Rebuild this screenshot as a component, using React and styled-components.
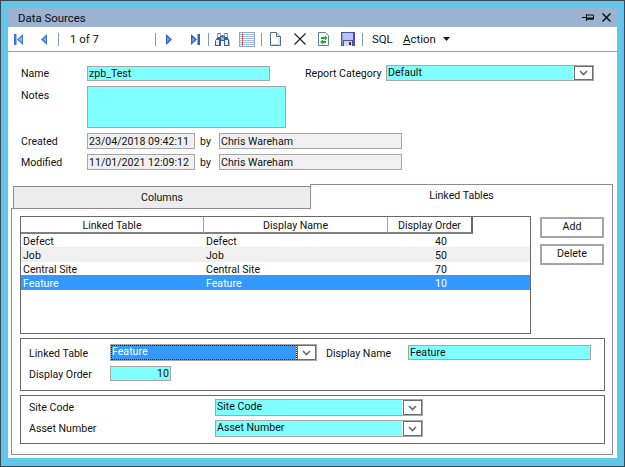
import React from 'react';
import styled, { createGlobalStyle } from 'styled-components';

const GlobalStyle = createGlobalStyle`
  html, body { margin: 0; padding: 0; background: #62c6e8; }
  body { font-family: Roboto, "Liberation Sans", Arial, sans-serif; font-size: 10.6px; color: #111; }
`;

const Frame = styled.div`
  box-sizing: border-box;
  width: 625px;
  height: 467px;
  padding: 7px;
  background: #62c6e8;
  border: 1px solid #3c4650;
`;

const Win = styled.div`
  width: 609px;
  height: 450px;
  background: #fff;
  display: flex;
  flex-direction: column;
`;

const TitleBar = styled.div`
  height: 19px;
  flex: none;
  display: flex;
  align-items: center;
  padding: 0 6px 0 10px;
  background: #9bb3d1;
  font-size: 11.4px;
  color: #0a0a14;
`;

const TitleText = styled.span`
  flex: 1;
`;

const TitleGlyphs = styled.div`
  display: flex;
  align-items: center;
  gap: 8px;
`;

const Toolbar = styled.div`
  box-sizing: border-box;
  height: 25px;
  flex: none;
  display: flex;
  align-items: center;
  padding-left: 6px;
  border-bottom: 1px solid #a0a0a0;
  font-size: 11.4px;
`;

const Slot = styled.span`
  display: flex;
  align-items: center;
  flex: none;
  margin-left: ${p => p.$ml || 0}px;
  width: ${p => (p.$w ? `${p.$w}px` : 'auto')};
`;

const Sep = styled.span`
  flex: none;
  width: 1px;
  height: 13px;
  background: #7f9db9;
  margin-left: ${p => p.$ml}px;
`;

const FormArea = styled.div`
  padding: 13px 0 0 13px;
`;

const FormRow = styled.div`
  display: flex;
  align-items: ${p => (p.$top ? 'flex-start' : 'center')};
  margin-top: ${p => p.$mt || 0}px;
`;

const Label = styled.span`
  flex: none;
  width: ${p => p.$w}px;
  margin-left: ${p => p.$ml || 0}px;
  padding-top: ${p => p.$pt || 0}px;
  white-space: nowrap;
`;

const Field = styled.div`
  box-sizing: border-box;
  flex: none;
  width: ${p => p.$w}px;
  height: ${p => p.$h || 15}px;
  margin-left: ${p => p.$ml || 0}px;
  padding: 0 1px;
  line-height: ${p => (p.$h === 16 ? 15 : 13)}px;
  white-space: nowrap;
  text-align: ${p => (p.$right ? 'right' : 'left')};
  border: 1px solid #a6a6a6;
  background: ${p => (p.$readonly ? '#f0f0f0' : '#7fffff')};
`;

const Combo = styled.div`
  box-sizing: border-box;
  flex: none;
  display: flex;
  width: ${p => p.$w}px;
  height: ${p => p.$h || 17}px;
  margin-left: ${p => p.$ml || 0}px;
  border: 1px solid #a6a6a6;
  background: #7fffff;
`;

const ComboText = styled.div`
  flex: 1;
  padding: 0 1px;
  line-height: 13px;
  white-space: nowrap;
  border-right: 1px solid #fff;
  ${p => p.$selected && `
    background: #3399ff;
    color: #fff;
    outline: 1px dotted #222;
    outline-offset: -1px;
  `}
`;

const ComboButton = styled.div`
  box-sizing: border-box;
  flex: none;
  width: 19px;
  display: flex;
  align-items: center;
  justify-content: center;
  background: #fff;
  border: 1px solid #6d6d6d;
`;

const TabsArea = styled.div`
  padding: 14px 4px 0 3px;
`;

const TabStrip = styled.div`
  display: flex;
  align-items: flex-end;
  height: 24px;
`;

const Tab = styled.div`
  box-sizing: border-box;
  text-align: center;
  border: 1px solid #8c8c96;
  ${p => p.$active ? `
    width: 303px;
    height: 25px;
    margin-bottom: -1px;
    padding-top: 4px;
    background: #fff;
    border-bottom: none;
    position: relative;
  ` : `
    width: 297px;
    height: 22px;
    margin-left: 2px;
    padding-top: 4px;
    background: #ececec;
    border-right: none;
    border-bottom: none;
  `}
`;

const Panel = styled.div`
  box-sizing: border-box;
  width: 602px;
  height: 247px;
  padding: 7px 8px;
  border: 1px solid #8c8c96;
`;

const ListRow = styled.div`
  display: flex;
  align-items: flex-start;
`;

const List = styled.div`
  box-sizing: border-box;
  width: 511px;
  height: 118px;
  border: 1px solid #696969;
`;

const HeaderRow = styled.div`
  display: flex;
  height: 17px;
`;

const HeaderCell = styled.div`
  box-sizing: border-box;
  flex: none;
  width: ${p => p.$w}px;
  text-align: center;
  line-height: 18px;
  border-bottom: 2px solid #808080;
  border-right: ${p => (p.$last ? '2px solid #696969' : '1px solid #a0a0a0')};
`;

const DataRow = styled.div`
  display: flex;
  height: ${p => p.$h}px;
  line-height: ${p => p.$lh}px;
  background: ${p => (p.$selected ? '#3399ff' : p.$alt ? '#f0f0f0' : '#fff')};
  color: ${p => (p.$selected ? '#fff' : '#111')};
`;

const Cell = styled.div`
  flex: none;
  box-sizing: border-box;
  width: ${p => p.$w}px;
  padding-left: 2px;
  padding-right: ${p => (p.$num ? 26 : 0)}px;
  text-align: ${p => (p.$num ? 'right' : 'left')};
`;

const ButtonColumn = styled.div`
  display: flex;
  flex-direction: column;
  gap: 6px;
  margin: 1px 0 0 9px;
`;

const Button = styled.div`
  box-sizing: border-box;
  width: 64px;
  height: 21px;
  line-height: 16px;
  text-align: center;
  background: #fff;
  border: 2px solid #a6a6a6;
`;

const Group = styled.div`
  box-sizing: border-box;
  width: 585px;
  height: ${p => p.$h}px;
  margin-top: ${p => p.$mt}px;
  padding: ${p => p.$pad};
  border: 1px solid #696969;
`;

const rows = [
  { name: 'Defect', order: 40, h: 13, lh: 15 },
  { name: 'Job', order: 50, h: 15, lh: 18, alt: true },
  { name: 'Central Site', order: 70, h: 13, lh: 16 },
  { name: 'Feature', order: 10, h: 15, lh: 18, selected: true },
];

const Chevron = () => (
  <svg width="9" height="6" viewBox="0 0 9 6">
    <path d="M1 1l3.500 3.500L8 1" fill="none" stroke="#6a6a6a" strokeWidth="1.600" />
  </svg>
);

const FirstIcon = () => (
  <svg width="9" height="11" viewBox="0 0 9 11">
    <rect width="2.500" height="11" fill="#3f75d6" />
    <path d="M9 0v11L3 5.500z" fill="#3f75d6" />
    <path d="M8 2.500v6L4.500 5.500z" fill="#8db4ef" />
  </svg>
);

const PrevIcon = () => (
  <svg width="6" height="11" viewBox="0 0 6 11">
    <path d="M6 0v11L0 5.500z" fill="#3f75d6" />
    <path d="M5 3v5L2 5.500z" fill="#8db4ef" />
  </svg>
);

const NextIcon = () => (
  <svg width="6" height="11" viewBox="0 0 6 11">
    <path d="M0 0v11l6-5.500z" fill="#2f62c4" />
    <path d="M1 3v5l3-2.500z" fill="#6e9de6" />
  </svg>
);

const LastIcon = () => (
  <svg width="9" height="11" viewBox="0 0 9 11">
    <rect x="6.500" width="2.500" height="11" fill="#2f62c4" />
    <path d="M0 0v11l6-5.500z" fill="#2f62c4" />
    <path d="M1 3v5l3-2.500z" fill="#6e9de6" />
  </svg>
);

const BinocularsIcon = () => (
  <svg width="15" height="13" viewBox="0 0 15 13">
    <path d="M2.500 0h3v3h1v-1h2v1h1V0h3v4l2 4v5H9V8H6v5H0V8l2.500-4z" fill="#3b5f94" />
    <path d="M3 1h2v3H3zM10 1h2v3h-2zM1 7h3v5H1zM10 7h3v5h-3z" fill="#e4ecf7" />
    <rect x="6" y="4" width="3" height="3" fill="#9db0cc" />
  </svg>
);

const ListIcon = () => (
  <svg width="16" height="15" viewBox="0 0 16 15">
    <rect x=".5" y=".5" width="15" height="14" fill="#fff" stroke="#8fa6c6" />
    <path d="M1 2.500h14M1 4.500h14M1 6.500h14M1 8.500h14M1 10.500h14M1 12.500h14" stroke="#9dbce6" />
    <path d="M3.500 1v13" stroke="#e0622a" />
  </svg>
);

const PageIcon = () => (
  <svg width="11" height="14" viewBox="0 0 11 14">
    <path d="M.5.500h6l4 4v9H.500z" fill="#fff" stroke="#53688a" />
    <path d="M6.500.500v4h4" fill="#d9e2ee" stroke="#53688a" />
    <path d="M9 6v6.500H2" fill="none" stroke="#c3cedd" />
  </svg>
);

const CrossIcon = () => (
  <svg width="12" height="12" viewBox="0 0 12 12">
    <path d="M.5.500l11 11M11.500.500l-11 11" stroke="#222" strokeWidth="1.200" />
  </svg>
);

const RefreshPageIcon = () => (
  <svg width="11" height="14" viewBox="0 0 11 14">
    <path d="M.5.500h7l3 3v10H.500z" fill="#f7fbf7" stroke="#6a7c96" />
    <path d="M3 5h4V3.500L9.500 6 7 8.500V7H3z" fill="#25a33a" />
    <path d="M8 9H5V7.500L2 10l3 2.500V11h3z" fill="#25a33a" />
  </svg>
);

const SaveIcon = () => (
  <svg width="14" height="14" viewBox="0 0 14 14">
    <path d="M0 0h14v14H0z" fill="#4b50b4" />
    <rect x="2" y="1" width="10" height="7" fill="#b9c2f0" />
    <rect x="1" y="1" width="1" height="12" fill="#8c98e6" />
    <rect x="3" y="9" width="8" height="5" fill="#d5d8e2" />
    <rect x="8" y="10" width="2" height="3" fill="#30343f" />
  </svg>
);

const CaretIcon = () => (
  <svg width="7" height="4" viewBox="0 0 7 4">
    <path d="M0 0h7L3.500 4z" fill="#1a1a1a" />
  </svg>
);

const PinIcon = () => (
  <svg width="12" height="9" viewBox="0 0 12 9">
    <path d="M0 4.500h4M4.500 1v7M4.500 2h7v4h-7" fill="none" stroke="#111" />
    <path d="M4.500 5.500h7" stroke="#111" strokeWidth="2" />
  </svg>
);

const CloseIcon = () => (
  <svg width="9" height="9" viewBox="0 0 9 9">
    <path d="M.5.500l8 8M8.500.500l-8 8" stroke="#111" strokeWidth="1.500" />
  </svg>
);

const App = () => {
  return (
    <Frame>
      <GlobalStyle />
      <Win>
        <TitleBar>
          <TitleText>Data Sources</TitleText>
          <TitleGlyphs>
            <PinIcon />
            <CloseIcon />
          </TitleGlyphs>
        </TitleBar>

        <Toolbar>
          <Slot><FirstIcon /></Slot>
          <Slot $ml={18}><PrevIcon /></Slot>
          <Sep $ml={11} />
          <Slot $ml={11} $w={85}>1 of 7</Slot>
          <Sep $ml={0} />
          <Slot $ml={10}><NextIcon /></Slot>
          <Slot $ml={19}><LastIcon /></Slot>
          <Sep $ml={8} />
          <Slot $ml={6}><BinocularsIcon /></Slot>
          <Slot $ml={9}><ListIcon /></Slot>
          <Sep $ml={6} />
          <Slot $ml={8}><PageIcon /></Slot>
          <Slot $ml={13}><CrossIcon /></Slot>
          <Slot $ml={12}><RefreshPageIcon /></Slot>
          <Slot $ml={12}><SaveIcon /></Slot>
          <Sep $ml={7} />
          <Slot $ml={9} $w={21}>SQL</Slot>
          <Slot $ml={10} $w={35}><span><u>A</u>ction</span></Slot>
          <Slot $ml={5}><CaretIcon /></Slot>
        </Toolbar>

        <FormArea>
          <FormRow>
            <Label $w={66}>Name</Label>
            <Field $w={183}>zpb_Test</Field>
            <Label $w={81} $ml={35}>Report Category</Label>
            <Combo $w={208} $h={16}>
              <ComboText>Default</ComboText>
              <ComboButton><Chevron /></ComboButton>
            </Combo>
          </FormRow>
          <FormRow $top $mt={5}>
            <Label $w={66} $pt={3}>Notes</Label>
            <Field $w={199} $h={42} />
          </FormRow>
          <FormRow $mt={5}>
            <Label $w={66} $pt={1}>Created</Label>
            <Field $w={108} $h={16} $readonly>23/04/2018 09:42:11</Field>
            <Label $w={19} $ml={5} $pt={1}>by</Label>
            <Field $w={183} $h={16} $readonly>Chris Wareham</Field>
          </FormRow>
          <FormRow $mt={5}>
            <Label $w={66} $pt={1}>Modified</Label>
            <Field $w={108} $h={16} $readonly>11/01/2021 12:09:12</Field>
            <Label $w={19} $ml={5} $pt={1}>by</Label>
            <Field $w={183} $h={16} $readonly>Chris Wareham</Field>
          </FormRow>
        </FormArea>

        <TabsArea>
          <TabStrip>
            <Tab>Columns</Tab>
            <Tab $active>Linked Tables</Tab>
          </TabStrip>
          <Panel>
            <ListRow>
              <List>
                <HeaderRow>
                  <HeaderCell $w={183}>Linked Table</HeaderCell>
                  <HeaderCell $w={184}>Display Name</HeaderCell>
                  <HeaderCell $w={85} $last>Display Order</HeaderCell>
                </HeaderRow>
                {rows.map(r => (
                  <DataRow key={r.name} $h={r.h} $lh={r.lh} $alt={r.alt} $selected={r.selected}>
                    <Cell $w={183}>{r.name}</Cell>
                    <Cell $w={184}>{r.name}</Cell>
                    <Cell $w={85} $num>{r.order}</Cell>
                  </DataRow>
                ))}
              </List>
              <ButtonColumn>
                <Button>Add</Button>
                <Button>Delete</Button>
              </ButtonColumn>
            </ListRow>

            <Group $h={53} $mt={4} $pad="5px 0 0 8px">
              <FormRow>
                <Label $w={81} $pt={2}>Linked Table</Label>
                <Combo $w={207}>
                  <ComboText $selected>Feature</ComboText>
                  <ComboButton><Chevron /></ComboButton>
                </Combo>
                <Label $w={82} $ml={9} $pt={2}>Display Name</Label>
                <Field $w={183}>Feature</Field>
              </FormRow>
              <FormRow $mt={5}>
                <Label $w={81} $pt={2}>Display Order</Label>
                <Field $w={61} $right>10</Field>
              </FormRow>
            </Group>

            <Group $h={49} $mt={4} $pad="3px 0 0 8px">
              <FormRow>
                <Label $w={186}>Site Code</Label>
                <Combo $w={208}>
                  <ComboText>Site Code</ComboText>
                  <ComboButton><Chevron /></ComboButton>
                </Combo>
              </FormRow>
              <FormRow $mt={4}>
                <Label $w={186}>Asset Number</Label>
                <Combo $w={208}>
                  <ComboText>Asset Number</ComboText>
                  <ComboButton><Chevron /></ComboButton>
                </Combo>
              </FormRow>
            </Group>
          </Panel>
        </TabsArea>
      </Win>
    </Frame>
  );
};

export default App;
